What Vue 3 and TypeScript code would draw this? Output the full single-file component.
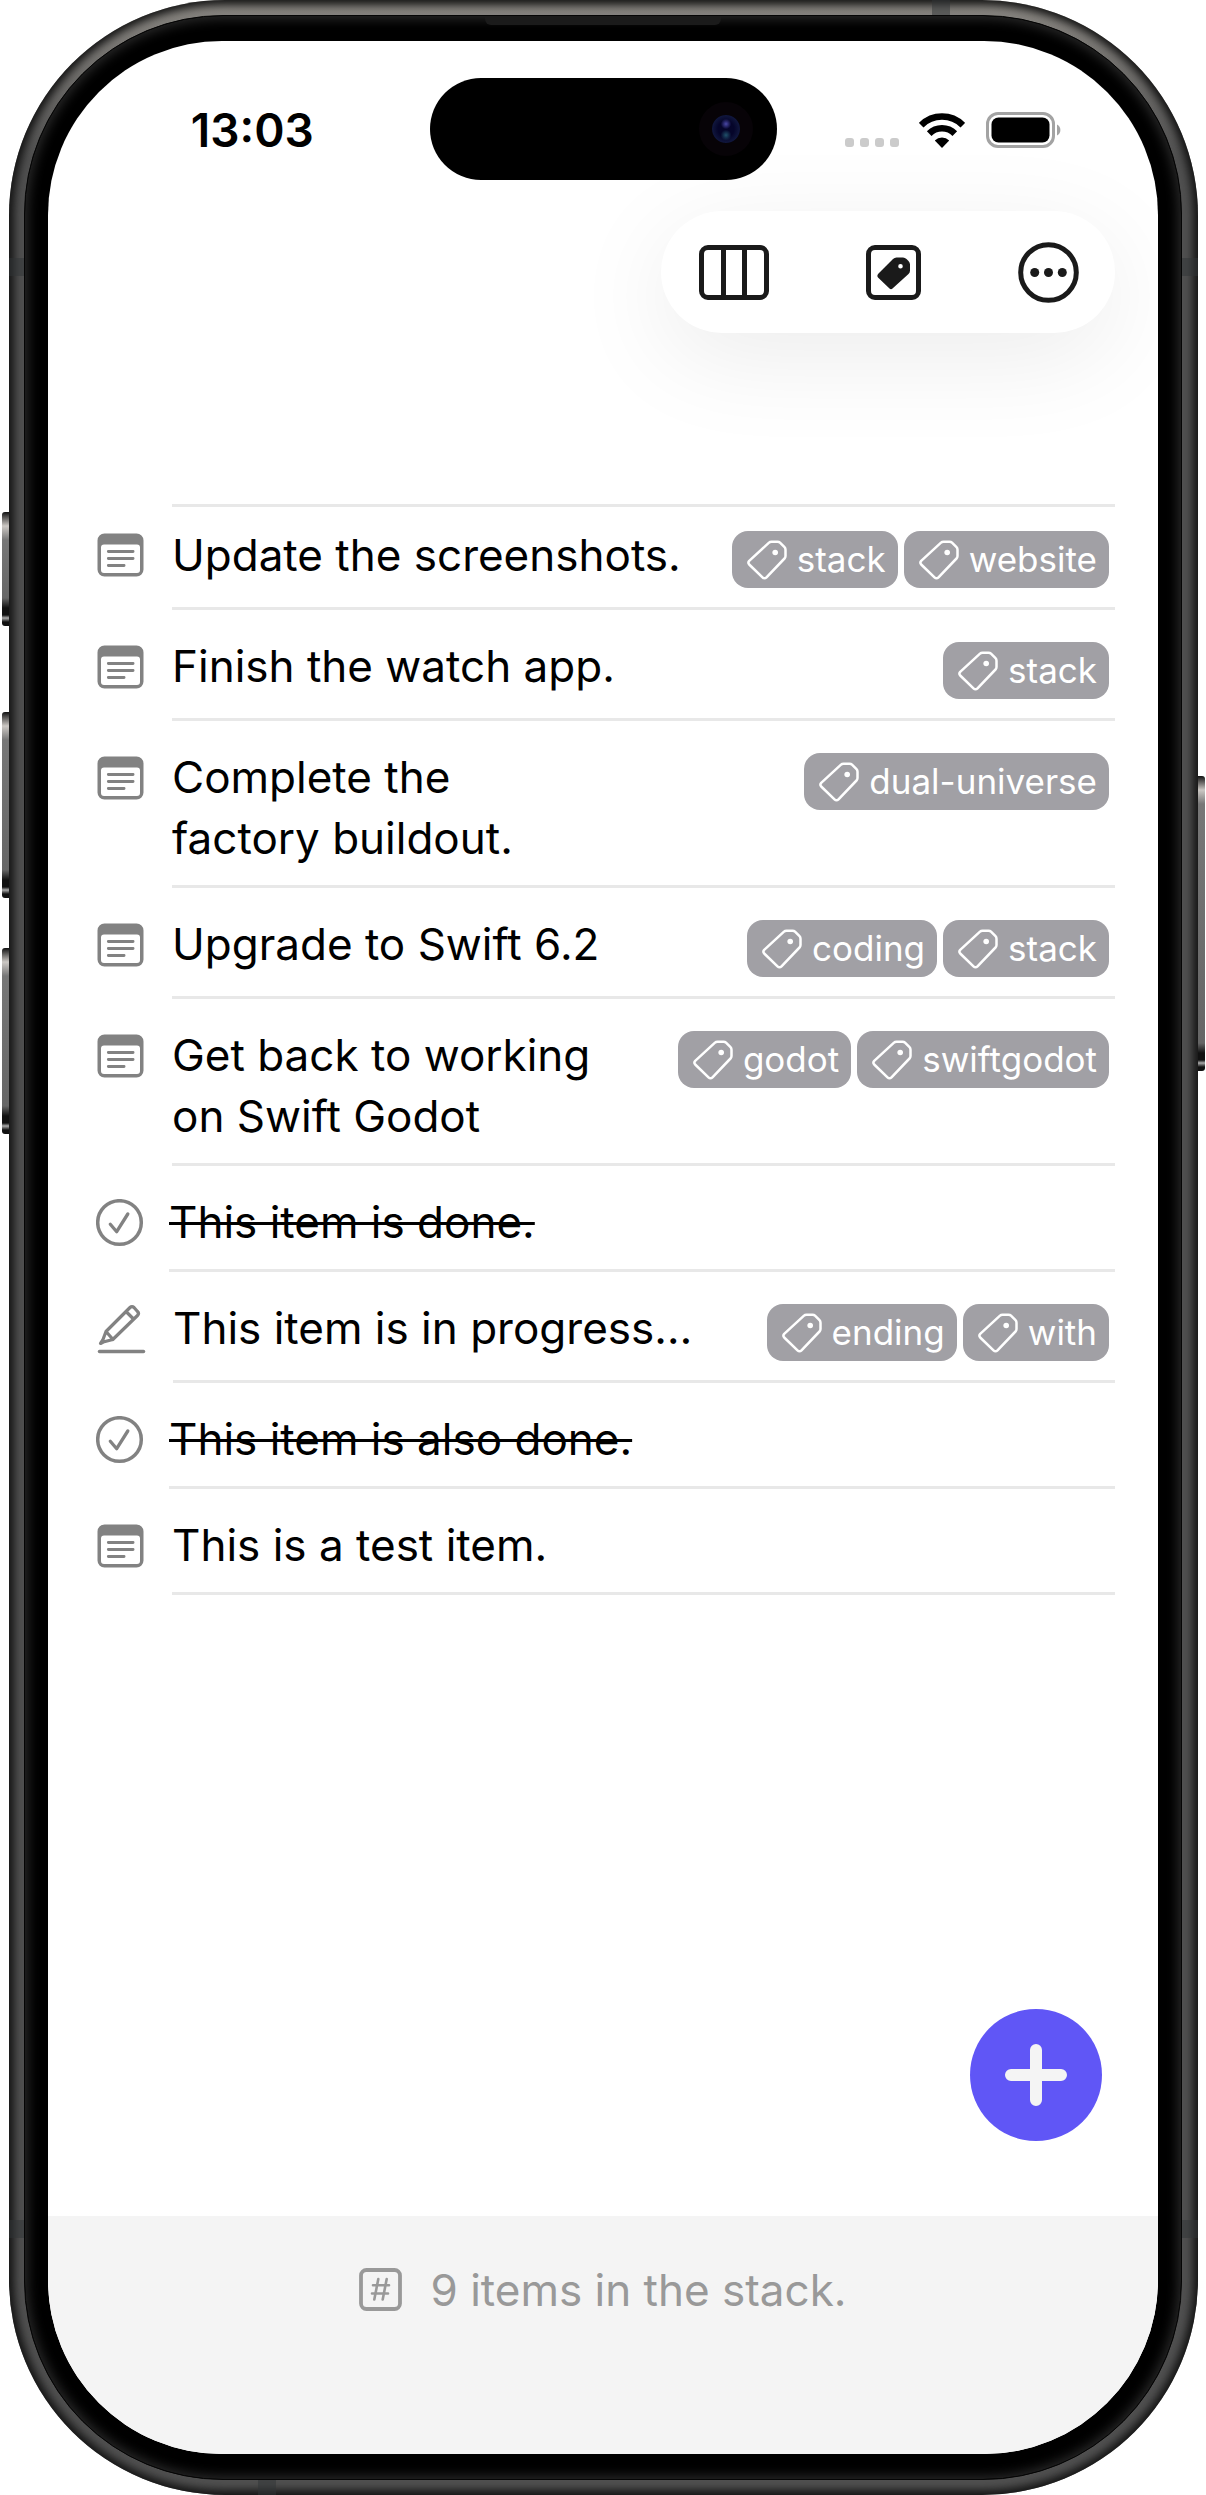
<script setup lang="ts">
import { computed, ref } from 'vue'

type Status = 'todo' | 'done' | 'progress'

interface StackItem {
  text: string
  status: Status
  tags: string[]
}

const items = ref<StackItem[]>([
  { text: 'Update the screenshots.', status: 'todo', tags: ['stack', 'website'] },
  { text: 'Finish the watch app.', status: 'todo', tags: ['stack'] },
  { text: 'Complete the\nfactory buildout.', status: 'todo', tags: ['dual-universe'] },
  { text: 'Upgrade to Swift 6.2', status: 'todo', tags: ['coding', 'stack'] },
  { text: 'Get back to working\non Swift Godot', status: 'todo', tags: ['godot', 'swiftgodot'] },
  { text: 'This item is done.', status: 'done', tags: [] },
  { text: 'This item is in progress…', status: 'progress', tags: ['ending', 'with'] },
  { text: 'This item is also done.', status: 'done', tags: [] },
  { text: 'This is a test item.', status: 'todo', tags: [] },
])

const summary = computed(() => `${items.value.length} items in the stack.`)
</script>

<template>
  <div class="device">
    <span class="key key-action"></span>
    <span class="key key-up"></span>
    <span class="key key-down"></span>
    <span class="key key-power"></span>
    <div class="rail">
      <span class="band band-lt"></span>
      <span class="band band-rt"></span>
      <span class="band band-lb"></span>
      <span class="band band-rb"></span>
      <span class="band band-top"></span>
      <span class="band band-bottom"></span>
      <div class="bezel">
        <span class="speaker"></span>
        <div class="screen">
          <header class="status">
            <time class="clock">13:03</time>
            <div class="island"><span class="camera"></span></div>
            <div class="indicators">
              <span class="signal"><i></i><i></i><i></i><i></i></span>
              <svg class="wifi" viewBox="0 0 46 36" width="46" height="36" aria-hidden="true">
                <g fill="none" stroke="#000" stroke-width="6.5">
                  <path d="M2.2 13.2A29.5 29.5 0 0 1 43.800 13.200" />
                  <path d="M10.200 21.600A18 18 0 0 1 35.800 21.600" />
                </g>
                <path d="M23 36l-7.200-7.600a10.500 10.500 0 0 1 14.400 0z" />
              </svg>
              <svg class="battery" viewBox="0 0 76 36" width="76" height="36" aria-hidden="true">
                <rect x="1.500" y="1.500" width="66" height="33" rx="10.500" fill="none" stroke="#a3a3a3" stroke-width="3" />
                <rect x="5.500" y="5.500" width="58" height="25" rx="7" />
                <path d="M71 12.500c4.500 2 4.500 9 0 11z" fill="#a3a3a3" />
              </svg>
            </div>
          </header>

          <nav class="toolbar" aria-label="Stack actions">
            <button type="button" aria-label="Columns">
              <svg viewBox="0 0 70 55" width="70" height="55" fill="none" stroke="#1a1a1a" stroke-width="5">
                <rect x="2.500" y="2.500" width="65" height="50" rx="6.500" />
                <path d="M24.500 3v49M45.500 3v49" />
              </svg>
            </button>
            <button type="button" aria-label="Tags">
              <svg viewBox="0 0 55 55" width="55" height="55">
                <rect x="2.500" y="2.500" width="50" height="50" rx="6.500" fill="none" stroke="#1a1a1a" stroke-width="5" />
                <path fill="#1a1a1a" fill-rule="evenodd" d="M30.500 12.500h6.500q2 0 3.500 1.500l2 2q1.500 1.500 1.500 3.500v6q0 2-1.500 3.500L26.500 43.500q-1.500 1.500-3 0L12 32.500q-1.500-1.500 0-3.500L27 14q1.500-1.500 3.500-1.500zM34.500 19a2.300 2.300 0 1 0 .01 4.600a2.300 2.300 0 0 0-.01-4.600z" />
              </svg>
            </button>
            <button type="button" aria-label="More">
              <svg viewBox="0 0 61 61" width="61" height="61">
                <circle cx="30.500" cy="30.500" r="27.800" fill="none" stroke="#1a1a1a" stroke-width="5" />
                <g fill="#1a1a1a">
                  <circle cx="16.700" cy="30.500" r="4.500" />
                  <circle cx="30.500" cy="30.500" r="4.500" />
                  <circle cx="44.300" cy="30.500" r="4.500" />
                </g>
              </svg>
            </button>
          </nav>

          <main class="content">
            <ul class="list">
              <li v-for="(item, i) in items" :key="i" class="row" :class="item.status">
                <span class="mark">
                  <svg v-if="item.status === 'todo'" viewBox="0 0 48 48" width="48" height="48" aria-hidden="true">
                    <path fill="#828282" fill-rule="evenodd" d="M8.500 2.500h32a7 7 0 0 1 7 7v29a7 7 0 0 1-7 7h-32a7 7 0 0 1-7-7v-29a7 7 0 0 1 7-7zM8 13.500a3 3 0 0 0-3 3V39a3 3 0 0 0 3 3h33a3 3 0 0 0 3-3V16.500a3 3 0 0 0-3-3z" />
                    <path stroke="#828282" stroke-width="2.800" stroke-linecap="round" d="M12.300 20.500h24.800M12.300 27.500h24.800M12.300 34.500h15.800" />
                  </svg>
                  <svg v-else-if="item.status === 'done'" viewBox="0 0 48 48" width="48" height="48" fill="none" stroke="#828282" stroke-linecap="round" stroke-linejoin="round" aria-hidden="true">
                    <circle cx="23.500" cy="23.500" r="21.800" stroke-width="3.500" />
                    <path stroke-width="3.300" d="M14.300 25.200l6.400 7.500L31.800 15" />
                  </svg>
                  <svg v-else viewBox="0 0 50 50" width="50" height="50" fill="none" stroke="#828282" stroke-width="3.200" stroke-linecap="round" stroke-linejoin="round" aria-hidden="true">
                    <path d="M4.500 39.500l2.800-1.500 9.500-2.500L41.500 11.500q2-2 0-4l-3.500-4q-2-2-4 0L10 27.500 6.800 36zM30 7.500l7.500 7.500M10 27.500l7 8" />
                    <path d="M3.500 47.500h44" stroke-width="3.500" />
                  </svg>
                </span>
                <div class="body">
                  <p class="text">{{ item.text }}</p>
                  <div v-if="item.tags.length" class="tags">
                    <a v-for="tag in item.tags" :key="tag" class="tag" href="#">
                      <svg viewBox="0 0 40 40" width="40" height="40" fill="none" stroke="#fff" stroke-width="2.500" stroke-linejoin="round" aria-hidden="true">
                        <path d="M24.500 1.700h6q1.500 0 2.500 1l4.500 4.500q1 1 1 2.500V16q0 1.500-1 2.500L19.500 37.300q-2 2-4 0L2.200 24.500q-1.600-1.800 0-3.600L22 2.700q1-1 2.500-1z" />
                        <circle cx="28.200" cy="12.500" r="2.800" fill="#fff" stroke="none" />
                      </svg>
                      <span>{{ tag }}</span>
                    </a>
                  </div>
                </div>
              </li>
            </ul>
            <button type="button" class="add" aria-label="Add item">
              <svg viewBox="0 0 64 64" width="64" height="64" stroke="#f4f4f4" stroke-width="12" stroke-linecap="round">
                <path d="M32 7v50M7 32h50" />
              </svg>
            </button>
          </main>

          <footer class="footer">
            <svg viewBox="0 0 43 43" width="43" height="43" fill="none" stroke="#999" stroke-linecap="round" aria-hidden="true">
              <rect x="2" y="2" width="39" height="39" rx="5.500" stroke-width="3.800" />
              <path stroke-width="2.600" d="M19.300 11l-4 20.500M27.700 11l-4 20.500M14 17.200h16M13 25.500h16" />
            </svg>
            <span>{{ summary }}</span>
          </footer>
        </div>
      </div>
    </div>
  </div>
</template>

<style>
html,
body {
  background: #fff;
}
</style>

<style scoped>
.device {
  position: relative;
  display: flex;
  box-sizing: border-box;
  min-height: 100vh;
  padding: 0 8px 0 9px;
  font-family: Inter, "Liberation Sans", sans-serif;
  color: #000;
}

.rail {
  position: relative;
  display: flex;
  flex: 1;
  padding: 15px 16px 15px 15px;
  border-radius: 216px;
  background: linear-gradient(#8a8782, #505050 160px, #505050);
  box-shadow: inset 0 0 9px 5px #141414;
}

.bezel {
  position: relative;
  display: flex;
  flex: 1;
  padding: 25px 23px;
  border: 1px solid #050505;
  border-radius: 199px;
  background: #000;
  box-shadow: inset 0 0 12px 3px #2a2a2a;
}

.screen {
  display: flex;
  flex: 1;
  flex-direction: column;
  overflow: hidden;
  border-radius: 174px;
  background: #fff;
}

.key {
  position: absolute;
  left: 2px;
  width: 8px;
  border-radius: 3px 0 0 3px;
  background: linear-gradient(#111 0, #ccc8c4 14px, #777 28px, #666 calc(100% - 28px), #111 calc(100% - 18px), #111 calc(100% - 11px), #aaa calc(100% - 8px), #111 calc(100% - 4px));
}

.key-action {
  top: 512px;
  height: 114px;
}

.key-up {
  top: 712px;
  height: 186px;
}

.key-down {
  top: 948px;
  height: 186px;
}

.key-power {
  top: 776px;
  right: 1px;
  left: auto;
  height: 295px;
  border-radius: 0 3px 3px 0;
}

.band {
  position: absolute;
  width: 16px;
  height: 18px;
  background: #30343680;
}

.band-lt,
.band-rt {
  top: 258px;
}

.band-lb,
.band-rb {
  bottom: 257px;
}

.band-lt,
.band-lb {
  left: 0;
}

.band-rt,
.band-rb {
  right: 0;
}

.band-top,
.band-bottom {
  width: 18px;
  height: 15px;
}

.band-top {
  top: 0;
  right: 248px;
}

.band-bottom {
  bottom: 0;
  left: 249px;
}

.speaker {
  position: absolute;
  top: 1px;
  left: 50%;
  width: 236px;
  height: 8px;
  margin-left: -118px;
  border-radius: 0 0 6px 6px;
  background: #1b1b1b;
}

.status {
  display: grid;
  grid-template-columns: 1fr 347px 1fr;
  align-items: center;
  padding-top: 37px;
}

.clock {
  padding: 2px 0 0 27px;
  font-size: 46px;
  font-weight: 600;
  line-height: 60px;
  text-align: center;
}

.island {
  display: flex;
  align-items: center;
  justify-content: flex-end;
  box-sizing: border-box;
  height: 102px;
  padding-right: 24px;
  border-radius: 51px;
  background: #000;
}

.camera {
  width: 28px;
  height: 28px;
  border: 13px solid #070307;
  border-radius: 50%;
  background: radial-gradient(circle at 50% 32%, #4a48a8 0, transparent 22%), radial-gradient(circle at 50% 72%, #20506a 0, transparent 22%), radial-gradient(#05052a 40%, #10163c 68%, #05050f 100%);
}

.indicators {
  display: flex;
  align-items: center;
  justify-content: center;
  padding: 2px 28px 0 0;
}

.signal {
  display: flex;
  align-self: flex-end;
  gap: 6px;
  padding-bottom: 1px;
}

.signal i {
  width: 9px;
  height: 9px;
  border-radius: 3px;
  background: #cbcbcb;
}

.wifi {
  margin: 0 21px 0 20px;
}

.toolbar {
  display: flex;
  align-items: center;
  align-self: flex-end;
  gap: 97px;
  height: 122px;
  margin: 31px 43px 0 0;
  padding: 0 36px 0 38px;
  border-radius: 61px;
  background: #fff;
  box-shadow: 0 24px 100px rgb(0 0 0 / 8%);
}

button {
  display: flex;
  align-items: center;
  justify-content: center;
  padding: 0;
  border: 0;
  background: none;
}

.content {
  position: relative;
  flex: 1;
  padding: 171px 43px 0 48px;
}

.list {
  margin: 0;
  padding: 0;
  list-style: none;
}

.row {
  display: flex;
}

.mark {
  display: flex;
  flex: none;
  align-items: center;
  width: 76px;
  height: 63px;
  padding-top: 25px;
}

.done .mark {
  width: 73px;
}

.progress .mark {
  width: 77px;
}

.body {
  display: flex;
  flex: 1;
  align-items: flex-start;
  justify-content: space-between;
  padding: 26px 6px 16px 0;
  border-bottom: 3px solid #e8e8e8;
}

.row:first-child .body {
  padding-top: 18px;
  border-top: 3px solid #e8e8e8;
}

.row:first-child .mark {
  padding-top: 19px;
}

.text {
  margin: 0;
  font-size: 44px;
  line-height: 61px;
  white-space: pre-line;
}

.done .text {
  text-decoration: line-through;
  text-decoration-thickness: 3px;
}

.tags {
  display: flex;
  gap: 6px;
  padding: 6px 0 3px;
}

.tag {
  display: flex;
  align-items: center;
  gap: 10px;
  height: 57px;
  padding: 0 12px 0 15px;
  border-radius: 16px;
  background: #a1a0a5;
  color: #fff;
  font-size: 35px;
  line-height: 57px;
  text-decoration: none;
}

.add {
  position: absolute;
  right: 56px;
  bottom: 75px;
  width: 132px;
  height: 132px;
  border-radius: 50%;
  background: #6056f6;
}

.footer {
  display: flex;
  justify-content: center;
  gap: 28px;
  height: 192px;
  padding-top: 46px;
  background: #f4f4f4;
  color: #999;
  font-size: 44px;
  line-height: 56px;
}

.footer svg {
  margin-top: 6px;
}
</style>
